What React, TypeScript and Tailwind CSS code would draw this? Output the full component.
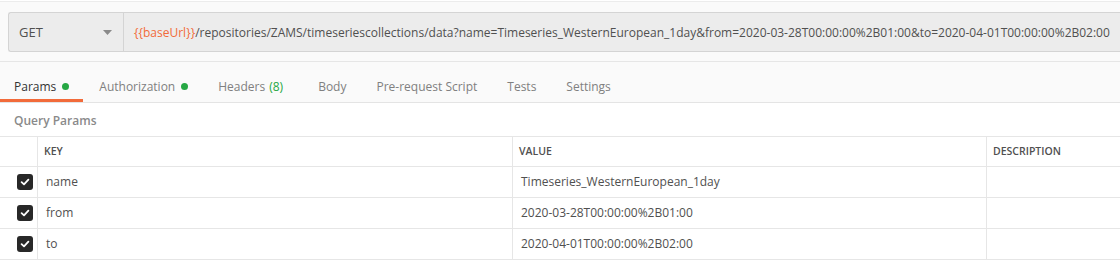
const TABS = [
  { label: 'Params', dot: true, active: true },
  { label: 'Authorization', dot: true },
  { label: 'Headers', count: '(8)' },
  { label: 'Body' },
  { label: 'Pre-request Script' },
  { label: 'Tests' },
  { label: 'Settings' },
]

const ROWS = [
  { key: 'name', value: 'Timeseries_WesternEuropean_1day' },
  { key: 'from', value: '2020-03-28T00:00:00%2B01:00' },
  { key: 'to', value: '2020-04-01T00:00:00%2B02:00' },
]

function Check() {
  return (
    <div className="w-4 h-4 rounded-[3px] bg-[#282828] flex items-center justify-center">
      <svg width="10" height="10" viewBox="0 0 10 10" fill="none">
        <path d="M1.6 5.2 L4 7.4 L8.4 2.6" stroke="white" strokeWidth="1.8" strokeLinecap="round" strokeLinejoin="round" />
      </svg>
    </div>
  )
}

export default function App() {
  return (
    <div className="w-[1120px] h-[261px] overflow-hidden bg-white text-[#505050]" style={{ fontFamily: '"Open Sans", sans-serif' }}>
      <div className="bg-[#fafafa] border-t border-[#ececec] mt-px h-[61px] border-b border-b-[#e6e6e6] pt-[10px] pl-2">
        <div className="flex h-10 border border-[#d4d4d4] border-r-0 rounded-l-[3px] bg-[#ececec]">
          <div className="w-[115px] shrink-0 flex items-center justify-between pl-[10px] pr-[11px] pt-px border-r border-[#d4d4d4] text-[13px] text-[#505050]">
            <span>GET</span>
            <svg width="9" height="5" viewBox="0 0 9 5"><path d="M0 0 H9 L4.5 5 Z" fill="#8a8a8a" /></svg>
          </div>
          <div className="flex items-center pl-[10px] pt-px text-[12px] whitespace-nowrap">
            <span className="text-[#f26b3a]">{'{{baseUrl}}'}</span>
            <span className="text-[#505050]">/repositories/ZAMS/timeseriescollections/data?name=Timeseries_WesternEuropean_1day&amp;from=2020-03-28T00:00:00%2B01:00&amp;to=2020-04-01T00:00:00%2B02:00</span>
          </div>
        </div>
      </div>
      <div className="bg-[#fafafa] h-[41px] flex border-b border-[#e4e4e4]">
        {TABS.map(t => (
          <div key={t.label} className={`relative flex items-center px-[14px] pt-[9px] text-[12px] ${t.count ? 'mr-[7px]' : 'mr-[2px]'} ${t.active ? 'text-[#333]' : 'text-[#808080]'}`}>
            <span>{t.label}</span>
            {t.dot && <span className="ml-[6px] w-[7px] h-[7px] rounded-full bg-[#26a844]" />}
            {t.count && <span className="ml-1 text-[#26a844]">{t.count}</span>}
            {t.active && <span className="absolute left-0 right-0 bottom-0 h-[3px] bg-[#f26b3a]" />}
          </div>
        ))}
      </div>
      <div className="h-[33px] flex items-center pl-[14px] pt-[3px] text-[12px] font-semibold text-[#8a8a8a]">Query Params</div>
      <div className="border-t border-[#e6e6e6]">
        <div className="grid grid-cols-[38px_475px_474px_1fr] h-[30px] border-b border-[#e6e6e6] text-[10.5px] font-semibold text-[#505050]">
          <div className="border-r border-[#e6e6e6]" />
          <div className="flex items-center pl-[6px] border-r border-[#e6e6e6]">KEY</div>
          <div className="flex items-center pl-[6px] border-r border-[#e6e6e6]">VALUE</div>
          <div className="flex items-center pl-[6px]">DESCRIPTION</div>
        </div>
        {ROWS.map(r => (
          <div key={r.key} className="grid grid-cols-[38px_475px_474px_1fr] h-[31px] border-b border-[#e6e6e6] text-[12px] text-[#505050]">
            <div className="flex items-center justify-end pr-[4px] border-r border-[#e6e6e6]"><Check /></div>
            <div className="flex items-center pl-[8px] border-r border-[#e6e6e6]">{r.key}</div>
            <div className="flex items-center pl-[8px] border-r border-[#e6e6e6]">{r.value}</div>
            <div />
          </div>
        ))}
      </div>
    </div>
  )
}
